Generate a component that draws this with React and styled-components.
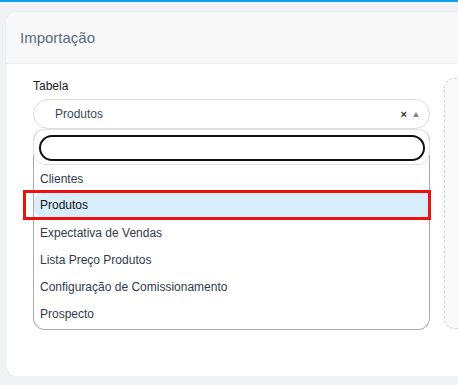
import React from 'react';
import styled, { createGlobalStyle } from 'styled-components';

const Global = createGlobalStyle`
  html, body {
    margin: 0;
    padding: 0;
    background: #f1f2f4;
    font-family: "Liberation Sans", Arial, sans-serif;
    overflow: hidden;
  }
`;

const TopBar = styled.div`
  height: 2px;
  background: #08a2f0;
`;

const Page = styled.div`
  padding: 10px 0 0 6px;
  overflow: hidden;
`;

const Card = styled.div`
  width: 480px;
  background: #fff;
  border-radius: 11px;
  overflow: hidden;
  box-shadow: 0 0 0 1px #eceef0;
`;

const CardHeader = styled.div`
  height: 51px;
  display: flex;
  align-items: center;
  padding-left: 14px;
  background: #f8f8f9;
  border-bottom: 1px solid #eeeff1;
  font-size: 15px;
  color: #5a6b7e;
`;

const CardBody = styled.div`
  display: grid;
  grid-template-columns: 397px 1fr;
  gap: 14px;
  padding: 14px 0 46px 27px;
`;

const Field = styled.div`
  display: flex;
  flex-direction: column;
`;

const Label = styled.label`
  font-size: 12px;
  color: #222;
  line-height: 14px;
  margin: 1px 0 6px;
`;

const Select = styled.div`
  height: 28px;
  border: 1px solid #dcdcdc;
  border-radius: 15px;
  display: flex;
  align-items: center;
  padding: 0 10px 0 21px;
  font-size: 12px;
  color: #3c4a5c;
`;

const Value = styled.span`
  flex: 1;
`;

const Clear = styled.span`
  font-size: 11px;
  font-weight: bold;
  color: #333;
  margin-right: 6px;
`;

const Arrow = styled.span`
  width: 0;
  height: 0;
  border-left: 3.5px solid transparent;
  border-right: 3.5px solid transparent;
  border-bottom: 5px solid #888;
`;

const Dropdown = styled.div`
  border: 1px solid #aaa;
  border-top: none;
  border-radius: 12px;
`;

const SearchWrap = styled.div`
  padding: 5px 4px 3px 5px;
  border: 1px solid #e2e2e2;
  border-radius: 12px;
  margin: 0 -1px;
`;

const Search = styled.input`
  box-sizing: border-box;
  width: 100%;
  height: 26px;
  border: 2px solid #111;
  border-radius: 13px;
  outline: none;
  font-family: inherit;
  font-size: 12px;
  padding: 0 8px;
`;

const Options = styled.ul`
  list-style: none;
  margin: 0;
  padding: 0 0 2px;
`;

const Option = styled.li`
  position: relative;
  display: flex;
  align-items: center;
  padding-left: 6px;
  font-size: 12px;
  color: ${p => (p.$active ? '#111' : '#2f3b4c')};
  background: ${p => (p.$active ? '#d8eefc' : 'transparent')};
  border-radius: ${p => (p.$active ? '9px 0 0 9px' : '0')};
  margin: ${p => (p.$active ? '1px 0 2px' : '0')};
  height: ${p => (p.$active ? '24px' : '27px')};
`;

const Marker = styled.span`
  position: absolute;
  left: -11px;
  right: -2px;
  top: -3px;
  bottom: -3px;
  border: 3px solid #ee1111;
  pointer-events: none;
`;

const DropZone = styled.div`
  border: 1px dashed #cfd2d6;
  border-right: none;
  border-radius: 10px 0 0 10px;
  background: #f8f9fa;
  height: 249px;
`;

const items = [
  'Clientes',
  'Produtos',
  'Expectativa de Vendas',
  'Lista Preço Produtos',
  'Configuração de Comissionamento',
  'Prospecto',
];

export default function App() {
  return (
    <>
      <Global />
      <TopBar />
      <Page>
        <Card>
          <CardHeader>Importação</CardHeader>
          <CardBody>
            <Field>
              <Label>Tabela</Label>
              <Select>
                <Value>Produtos</Value>
                <Clear>×</Clear>
                <Arrow />
              </Select>
              <Dropdown>
                <SearchWrap>
                  <Search defaultValue="" />
                </SearchWrap>
                <Options>
                  {items.map(it => (
                    <Option key={it} $active={it === 'Produtos'}>
                      {it}
                      {it === 'Produtos' && <Marker />}
                    </Option>
                  ))}
                </Options>
              </Dropdown>
            </Field>
            <DropZone />
          </CardBody>
        </Card>
      </Page>
    </>
  );
}
